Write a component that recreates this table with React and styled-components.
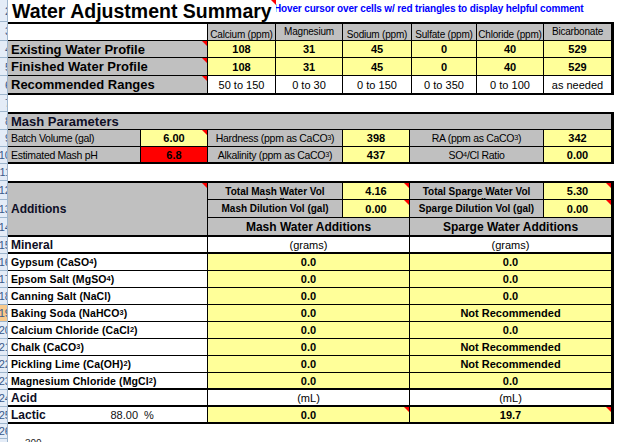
import React from "react";
import styled, { createGlobalStyle, css } from "styled-components";

const GlobalStyle = createGlobalStyle`
  html, body {
    margin: 0;
    padding: 0;
    background: #fff;
  }
  body {
    width: 629px;
    height: 442px;
    overflow: hidden;
    font-family: "Liberation Sans", Arial, sans-serif;
    color: #000;
  }
  * {
    box-sizing: border-box;
  }
`;

const fills = {
  gray: "#c0c0c0",
  yellow: "#ffff99",
  red: "#ff0000",
  white: "#ffffff",
};

const justify = { left: "flex-start", center: "center", right: "flex-end" };

const noteMark = css`
  &::after {
    content: "";
    position: absolute;
    top: 0;
    right: 0;
    border-style: solid;
    border-width: 0 5px 5px 0;
    border-color: transparent #ff0000 transparent transparent;
  }
`;

const Page = styled.div`
  display: flex;
  align-items: flex-start;
  height: 442px;
  overflow: hidden;
`;

const Strip = styled.div`
  width: 8px;
  flex: none;
  display: flex;
  flex-direction: column;
  background: #e4ecf7;
  border-right: 1px solid #9eb6ce;
`;

const RowNum = styled.div`
  height: ${p => p.$h}px;
  flex: none;
  display: flex;
  align-items: center;
  justify-content: flex-end;
  overflow: hidden;
  border-bottom: 1px solid #9eb6ce;
  background: ${p => (p.$active ? "#f8c98b" : "transparent")};
  font-size: 11px;
  color: #3a5a8a;
  span {
    margin-right: -4px;
  }
`;

const Sheet = styled.div`
  flex: none;
  display: flex;
  flex-direction: column;
  & > * {
    flex: none;
  }
`;

const TitleRow = styled.div`
  height: 22px;
  display: flex;
`;

const Title = styled.div`
  position: relative;
  width: 268px;
  padding: 1px 0 0 4px;
  font-size: 19.5px;
  line-height: 21px;
  font-weight: bold;
  white-space: nowrap;
  ${noteMark}
`;

const Note = styled.div`
  width: 338px;
  overflow: hidden;
  white-space: nowrap;
  padding-top: 3px;
  color: #0000ff;
  font-size: 10px;
  font-weight: bold;
  letter-spacing: -0.15px;
  span {
    margin-left: -2px;
  }
`;

const Gap = styled.div`
  height: ${p => p.$h || 17}px;
`;

const Table = styled.div`
  display: grid;
  grid-template-columns: ${p => p.$cols};
  grid-template-rows: ${p => p.$rows};
  border-top: 2px solid #000;
  border-right: 2px solid #000;
`;

const Cell = styled.div`
  position: relative;
  display: flex;
  align-items: ${p => (p.$top ? "flex-start" : "center")};
  justify-content: ${p => justify[p.$align || "center"]};
  padding: 0 3px;
  min-width: 0;
  overflow: hidden;
  white-space: nowrap;
  background: ${p => fills[p.$bg || "white"]};
  border-right: 1px solid #000;
  border-bottom: ${p => p.$bb || 1}px solid #000;
  grid-column: ${p => (p.$span ? `span ${p.$span}` : "auto")};
  grid-row: ${p => (p.$rows ? `span ${p.$rows}` : "auto")};
  ${p => p.$note && noteMark}
`;

const RowLabel = styled(Cell).attrs({ $bg: "gray", $align: "left" })`
  font-size: 13px;
  font-weight: bold;
`;

const ColHead = styled(Cell).attrs({ $bg: "gray" })`
  font-size: 10px;
  letter-spacing: -0.2px;
  padding-top: ${p => (p.$top ? "2px" : "4px")};
`;

const Num = styled(Cell)`
  background: ${p => fills[p.$bg || "yellow"]};
  font-size: 11px;
  font-weight: bold;
`;

const Range = styled(Cell)`
  font-size: 11px;
`;

const SectionHead = styled(Cell).attrs({ $bg: "gray", $align: "left" })`
  font-size: 13px;
  font-weight: bold;
  color: #0e0e26;
`;

const ParamLabel = styled(Cell).attrs({ $bg: "gray" })`
  font-size: 10.5px;
  letter-spacing: -0.3px;
`;

const VolLabel = styled(Cell).attrs({ $bg: "gray", $top: true })`
  font-size: 10px;
  font-weight: bold;
  line-height: 11px;
  white-space: normal;
  text-align: center;
  padding-top: 3px;
`;

const GroupHead = styled(Cell).attrs({ $bg: "gray" })`
  font-size: 12px;
  font-weight: bold;
`;

const Unit = styled(Cell)`
  font-size: 11px;
`;

const BigLabel = styled(Cell).attrs(p => ({ $align: "left", $bg: p.$bg || "white" }))`
  font-size: 12px;
  font-weight: bold;
  color: #0e0e26;
  padding-right: ${p => (p.$split ? "0" : "3px")};
`;

const SaltLabel = styled(Cell).attrs({ $align: "left" })`
  font-size: 10.5px;
  font-weight: bold;
  letter-spacing: 0.1px;
`;

const Sub = styled.sub`
  font-size: 0.7em;
  vertical-align: -0.2em;
  line-height: 0;
`;

const Strength = styled.span`
  margin-left: auto;
  padding-right: 3px;
  font-size: 11px;
  font-weight: normal;
  color: #111;
`;

const Percent = styled.span`
  width: 66px;
  padding-left: 3px;
  font-size: 11px;
  font-weight: normal;
  color: #111;
`;

const Footer = styled.div`
  padding: 0 0 0 17px;
  font-size: 10px;
  color: #222;
`;

const ions = [
  { name: "Calcium (ppm)", ex: "108", fin: "108", range: "50 to 150" },
  { name: "Magnesium", top: true, ex: "31", fin: "31", range: "0 to 30" },
  { name: "Sodium (ppm)", ex: "45", fin: "45", range: "0 to 150" },
  { name: "Sulfate (ppm)", ex: "0", fin: "0", range: "0 to 350" },
  { name: "Chloride (ppm)", ex: "40", fin: "40", range: "0 to 100" },
  { name: "Bicarbonate", top: true, ex: "529", fin: "529", range: "as needed" },
];

const salts = [
  { name: <>Gypsum (CaSO<Sub>4</Sub>)</>, mash: "0.0", sparge: "0.0" },
  { name: <>Epsom Salt (MgSO<Sub>4</Sub>)</>, mash: "0.0", sparge: "0.0" },
  { name: "Canning Salt (NaCl)", mash: "0.0", sparge: "0.0" },
  { name: <>Baking Soda (NaHCO<Sub>3</Sub>)</>, mash: "0.0", sparge: "Not Recommended" },
  { name: <>Calcium Chloride (CaCl<Sub>2</Sub>)</>, mash: "0.0", sparge: "0.0" },
  { name: <>Chalk (CaCO<Sub>3</Sub>)</>, mash: "0.0", sparge: "Not Recommended" },
  { name: <>Pickling Lime (Ca(OH)<Sub>2</Sub>)</>, mash: "0.0", sparge: "Not Recommended" },
  { name: <>Magnesium Chloride (MgCl<Sub>2</Sub>)</>, mash: "0.0", sparge: "0.0" },
];

const rowHeights = [22, 19, 17, 18, 19, 17, 18, 17, 17, 17, 19, 18, 19, 17, 17, 17, 17, 17, 17, 17, 17, 17, 17, 17, 15, 20];

const App = () => {
  return (
    <>
      <GlobalStyle />
      <Page>
        <Strip>
          {rowHeights.map((h, i) => (
            <RowNum key={i} $h={h} $active={i + 2 === 19}>
              <span>{i + 2}</span>
            </RowNum>
          ))}
        </Strip>

        <Sheet>
          <TitleRow>
            <Title>Water Adjustment Summary</Title>
            <Note>
              <span>Hover cursor over cells w/ red triangles to display helpful comment</span>
            </Note>
          </TitleRow>

          <Table $cols="200px 68px 67px 69px 65px 67px 68px" $rows="17px 17px 18px 19px">
            <Cell />
            {ions.map(ion => (
              <ColHead key={ion.name} $top={ion.top}>{ion.name}</ColHead>
            ))}
            <RowLabel $note>Existing Water Profile</RowLabel>
            {ions.map(ion => (
              <Num key={ion.name}>{ion.ex}</Num>
            ))}
            <RowLabel $note>Finished Water Profile</RowLabel>
            {ions.map(ion => (
              <Num key={ion.name}>{ion.fin}</Num>
            ))}
            <RowLabel $note $bb={2}>Recommended Ranges</RowLabel>
            {ions.map(ion => (
              <Range key={ion.name} $bb={2}>{ion.range}</Range>
            ))}
          </Table>

          <Gap />

          <Table $cols="133px 67px 135px 67px 134px 68px" $rows="16px 17px 17px">
            <SectionHead $span={6}>Mash Parameters</SectionHead>
            <ParamLabel $align="left">Batch Volume (gal)</ParamLabel>
            <Num $note>6.00</Num>
            <ParamLabel>Hardness (ppm as CaCO<Sub>3</Sub>)</ParamLabel>
            <Num>398</Num>
            <ParamLabel>RA (ppm as CaCO<Sub>3</Sub>)</ParamLabel>
            <Num>342</Num>
            <ParamLabel $align="left" $bb={2}>Estimated Mash pH</ParamLabel>
            <Num $bg="red" $bb={2}>6.8</Num>
            <ParamLabel $bb={2}>Alkalinity (ppm as CaCO<Sub>3</Sub>)</ParamLabel>
            <Num $bb={2}>437</Num>
            <ParamLabel $bb={2}>SO<Sub>4</Sub>/Cl Ratio</ParamLabel>
            <Num $bb={2}>0.00</Num>
          </Table>

          <Gap />

          <Table
            $cols="200px 135px 67px 134px 68px"
            $rows="17px 18px 19px 17px repeat(8, 17px) 17px 17px"
          >
            <BigLabel $bg="gray" $rows={3} $bb={2} $note>Additions</BigLabel>
            <VolLabel>Total Mash Water Vol<br />(gal)</VolLabel>
            <Num $note>4.16</Num>
            <VolLabel>Total Sparge Water Vol<br />(gal)</VolLabel>
            <Num $note>5.30</Num>
            <VolLabel>Mash Dilution Vol (gal)</VolLabel>
            <Num $note>0.00</Num>
            <VolLabel>Sparge Dilution Vol (gal)</VolLabel>
            <Num $note>0.00</Num>
            <GroupHead $span={2} $bb={2}>Mash Water Additions</GroupHead>
            <GroupHead $span={2} $bb={2}>Sparge Water Additions</GroupHead>

            <BigLabel $bb={2}>Mineral</BigLabel>
            <Unit $span={2} $bb={2}>(grams)</Unit>
            <Unit $span={2} $bb={2}>(grams)</Unit>

            {salts.map((s, i) => {
              const bb = i === salts.length - 1 ? 2 : 1;
              return (
                <React.Fragment key={i}>
                  <SaltLabel $bb={bb}>{s.name}</SaltLabel>
                  <Num $span={2} $bb={bb}>{s.mash}</Num>
                  <Num $span={2} $bb={bb}>{s.sparge}</Num>
                </React.Fragment>
              );
            })}

            <BigLabel $bb={2}>Acid</BigLabel>
            <Unit $span={2} $bb={2}>(mL)</Unit>
            <Unit $span={2} $bb={2}>(mL)</Unit>

            <BigLabel $bb={2} $split>
              Lactic
              <Strength>88.00</Strength>
              <Percent>%</Percent>
            </BigLabel>
            <Num $span={2} $bb={2} $note>0.0</Num>
            <Num $span={2} $bb={2} $note>19.7</Num>
          </Table>

          <Gap $h={14} />
          <Footer>300</Footer>
        </Sheet>
      </Page>
    </>
  );
};

export default App;
